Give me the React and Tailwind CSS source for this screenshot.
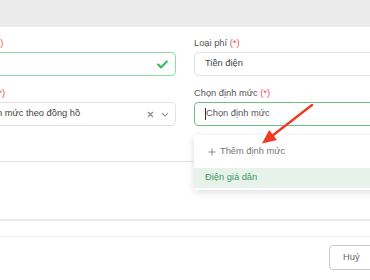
import React from "react";

function Req() {
  return <span className="text-[#f0505a]">(*)</span>;
}

export default function App() {
  return (
    <div className="relative w-[370px] h-[280px] overflow-hidden bg-white font-['Liberation_Sans',Arial,sans-serif] text-[9.3px] text-[#555]">
      <div className="h-[27px] bg-[#ebebeb]" />
      <div className="ml-[-25px] w-[420px] grid grid-cols-[201px_201px] gap-x-[18px] pt-[9px]">
        {/* left column */}
        <div className="flex flex-col">
          <div className="h-[14px] leading-[14px] whitespace-nowrap">
            Tên <Req />
          </div>
          <div className="mt-[2px] h-[24px] rounded-[4px] border border-[#8fdfa8] flex items-center justify-end pr-[7px]">
            <svg width="11" height="9" viewBox="0 0 11 9" fill="none">
              <path d="M1.2 4.6 L4 7.4 L9.8 1.4" stroke="#35bb5f" strokeWidth="2.1" strokeLinecap="round" strokeLinejoin="round" />
            </svg>
          </div>
          <div className="mt-[10px] h-[14px] leading-[14px] whitespace-nowrap">
            Loại <Req />
          </div>
          <div className="mt-[2px] h-[24px] rounded-[4px] border border-[#e2e2e2] flex items-center pl-[7px] pr-[6px]">
            <span className="flex-1 whitespace-nowrap text-[#444]">Định mức theo đồng hồ</span>
            <svg width="7" height="7" viewBox="0 0 7 7" className="mr-[7px]">
              <path d="M1 1 L6 6 M6 1 L1 6" stroke="#8a8a8a" strokeWidth="1.1" />
            </svg>
            <svg width="8" height="5" viewBox="0 0 8 5" fill="none">
              <path d="M1 1 L4 4 L7 1" stroke="#9a9a9a" strokeWidth="1.1" />
            </svg>
          </div>
        </div>
        {/* right column */}
        <div className="relative flex flex-col">
          <div className="h-[14px] leading-[14px] whitespace-nowrap">
            Loại phí <Req />
          </div>
          <div className="mt-[2px] h-[24px] rounded-[4px] border border-[#e2e2e2] flex items-center pl-[10px] text-[#444]">
            Tiền điện
          </div>
          <div className="mt-[10px] h-[14px] leading-[14px] whitespace-nowrap">
            Chọn định mức <Req />
          </div>
          <div className="mt-[2px] h-[24px] rounded-[4px] border border-[#6cbf88] flex items-center pl-[10px] text-[#555]">
            <span className="w-px h-[12px] bg-[#333]" />
            <span>Chọn định mức</span>
          </div>
          {/* dropdown */}
          <div className="absolute left-0 top-[99px] w-[201px] bg-white rounded-[4px] shadow-[0_2px_8px_rgba(0,0,0,0.13)] pt-[4px] pb-[2px] z-10">
            <div className="h-[26px] flex items-center pl-[14px] text-[#777]">
              <svg width="8" height="8" viewBox="0 0 8 8" className="mr-[4px]">
                <path d="M4 0.5 V7.5 M0.5 4 H7.5" stroke="#888" strokeWidth="1" />
              </svg>
              <span>Thêm định mức</span>
            </div>
            <div className="mt-[3px] h-[20px] flex items-center pl-[11px] bg-[#e7f2eb] text-[#3a9a5e]">
              Điện giá dân
            </div>
          </div>
        </div>
      </div>
      <div className="mt-[35px] border-b border-[#e3e3e3]" />
      <div className="h-[57px]" />
      <div className="h-[2px] bg-[#e9e9ec]" />
      <div className="h-[15px]" />
      <div className="border-b border-[#f2f2f2]" />
      <div className="flex pl-[329px] pt-[8px]">
        <div className="h-[25px] w-[56px] shrink-0 rounded-[4px] border border-[#c8c8c8] flex items-center pl-[13px] text-[#666]">
          Huỷ
        </div>
      </div>
      <svg className="absolute inset-0 pointer-events-none z-20" width="370" height="280" viewBox="0 0 370 280">
        <line x1="312" y1="105" x2="272" y2="136" stroke="#ee3b22" strokeWidth="2.4" strokeLinecap="round" />
        <polygon points="262,143.5 277,140 269.2,130" fill="#ee3b22" />
      </svg>
    </div>
  );
}
